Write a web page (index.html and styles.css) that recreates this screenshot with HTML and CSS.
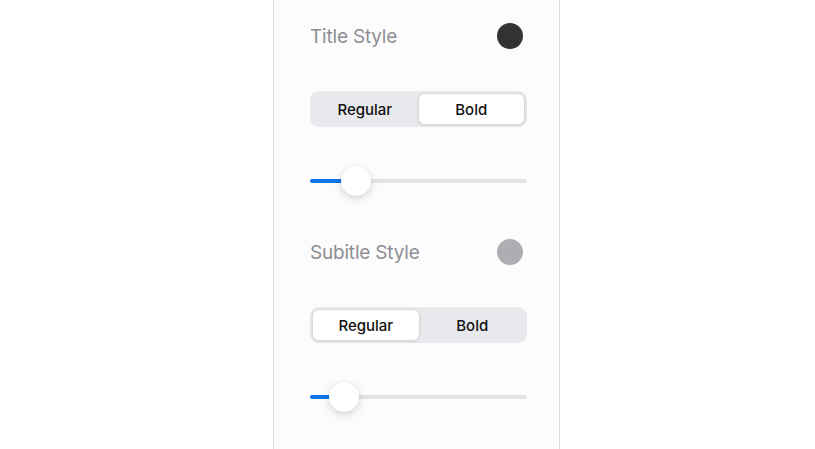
FILE: index.html
```html
<!DOCTYPE html>
<html lang="en">
<head>
    <meta charset="UTF-8">
    <meta name="viewport" content="width=device-width, initial-scale=1.0">
    <title>Text Style</title>
    <link rel="stylesheet" href="styles.css">
</head>
<body>
    <div class="panel">
        <div class="style-group">
            <div class="style-row">
                <span class="style-label">Title Style</span>
                <span class="swatch swatch-dark"></span>
            </div>
            <div class="segmented">
                <button class="segment">Regular</button>
                <button class="segment active">Bold</button>
            </div>
            <div class="slider">
                <div class="track">
                    <div class="fill" style="width: 21.2%"></div>
                    <div class="thumb" style="left: 21.2%"></div>
                </div>
            </div>
        </div>
        <div class="style-group">
            <div class="style-row">
                <span class="style-label">Subitle Style</span>
                <span class="swatch swatch-light"></span>
            </div>
            <div class="segmented">
                <button class="segment active">Regular</button>
                <button class="segment">Bold</button>
            </div>
            <div class="slider">
                <div class="track">
                    <div class="fill" style="width: 15.7%"></div>
                    <div class="thumb" style="left: 15.7%"></div>
                </div>
            </div>
        </div>
    </div>
</body>
</html>
```

FILE: styles.css
```css
body, html {
    margin: 0;
    padding: 0;
    background: #fff;
    font-family: Inter, "Noto Sans", sans-serif;
    height: 100%;
}
.panel {
    margin-left: 273px;
    width: 287px;
    min-height: 100%;
    box-sizing: border-box;
    background: #fcfcfc;
    border-left: 1px solid #dcdcdc;
    border-right: 1px solid #dcdcdc;
    padding: 23px 32px 0 36px;
}
.style-group {
    display: flex;
    flex-direction: column;
    margin-bottom: 43px;
}
.style-row {
    display: flex;
    align-items: center;
    justify-content: space-between;
    height: 26px;
    padding-right: 4px;
}
.style-label {
    font-size: 19px;
    color: #8e8e93;
    letter-spacing: -0.2px;
}
.swatch {
    width: 26px;
    height: 26px;
    border-radius: 50%;
}
.swatch-dark {
    background: #333335;
}
.swatch-light {
    background: #aeaeb2;
}
.segmented {
    display: flex;
    margin-top: 42px;
    height: 36px;
    padding: 2px;
    box-sizing: border-box;
    background: #e8e9ec;
    border-radius: 9px;
}
.segment {
    flex: 1;
    border: none;
    background: transparent;
    font-family: Inter, "Noto Sans", sans-serif;
    font-size: 15px;
    font-weight: 500;
    color: #111;
    border-radius: 7px;
    padding: 0;
}
.segment.active {
    background: #fff;
    border: 1px solid #d8d8dc;
    box-shadow: 0 1px 3px rgba(0, 0, 0, 0.08);
}
.slider {
    margin-top: 39px;
    height: 30px;
    display: flex;
    align-items: center;
}
.track {
    position: relative;
    width: 100%;
    height: 4px;
    border-radius: 2px;
    background: #e3e3e5;
}
.fill {
    height: 100%;
    border-radius: 2px;
    background: #0a74e8;
}
.thumb {
    position: absolute;
    top: 50%;
    width: 30px;
    height: 30px;
    margin: -15px 0 0 -15px;
    border-radius: 50%;
    background: #fff;
    box-shadow: 0 3px 8px rgba(0, 0, 0, 0.15), 0 0 1px rgba(0, 0, 0, 0.12);
}
```
